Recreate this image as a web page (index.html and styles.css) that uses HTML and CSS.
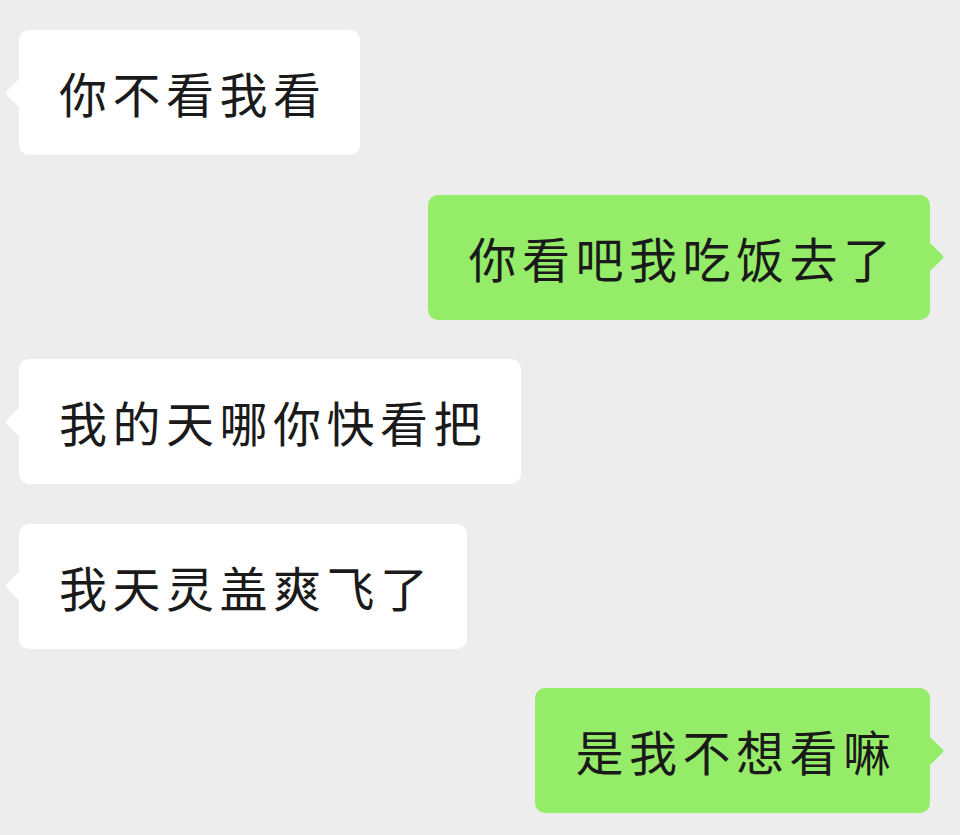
FILE: index.html
```html
<!DOCTYPE html>
<html lang="zh">
<head>
<meta charset="UTF-8">
<meta name="viewport" content="width=device-width, initial-scale=1.0">
<title>聊天</title>
<link rel="stylesheet" href="styles.css">
</head>
<body>

<div class="chat">
    <div class="msg other">
        <div class="bubble">你不看我看</div>
    </div>
    <div class="msg me">
        <div class="bubble">你看吧我吃饭去了</div>
    </div>
    <div class="msg other">
        <div class="bubble">我的天哪你快看把</div>
    </div>
    <div class="msg other">
        <div class="bubble">我天灵盖爽飞了</div>
    </div>
    <div class="msg me">
        <div class="bubble">是我不想看嘛</div>
    </div>
</div>

</body>
</html>
```

FILE: styles.css
```css
body {
    margin: 0;
    background: #ededed;
    font-family: "Noto Sans CJK SC", "Noto Sans", sans-serif;
}
.chat {
    display: flex;
    flex-direction: column;
    gap: 39.5px;
    padding: 30px 30px 20px 19px;
}
.msg {
    display: flex;
}
.msg.me {
    justify-content: flex-end;
}
.bubble {
    position: relative;
    height: 125px;
    line-height: 125px;
    padding: 0 33.5px 0 40px;
    font-size: 48px;
    letter-spacing: 5.5px;
    color: #1a1a1a;
    border-radius: 10px;
    background: #fff;
    white-space: nowrap;
}
/* little tail pointing at the avatar side */
.bubble::before {
    content: "";
    position: absolute;
    top: 50%;
    width: 20px;
    height: 20px;
    margin-top: -10px;
    background: inherit;
    border-radius: 2px;
    transform: rotate(45deg);
}
.other .bubble::before {
    left: -10px;
}
.me .bubble {
    background: #95ec69;
}
.me .bubble::before {
    right: -10px;
}
```
